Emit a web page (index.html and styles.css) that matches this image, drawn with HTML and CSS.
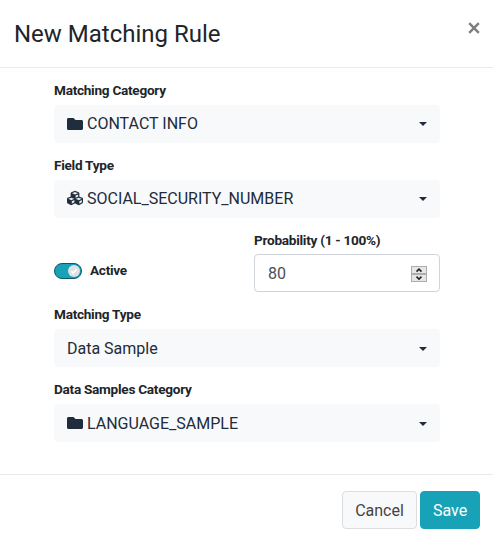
FILE: index.html
```html
<!DOCTYPE html>
<html lang="en">
<head>
<meta charset="utf-8">
<title>New Matching Rule</title>
<link rel="stylesheet" href="styles.css">
</head>
<body>
<svg width="0" height="0" class="defs">
<symbol id="folder" viewBox="0 0 512 512"><path d="M464 128H272l-64-64H48C21.5 64 0 85.5 0 112v288c0 26.5 21.5 48 48 48h416c26.5 0 48-21.5 48-48V176c0-26.5-21.5-48-48-48z"/></symbol>
<symbol id="cubes" viewBox="0 0 512 512"><path d="M488.6 250.2L392 214V105.5c0-15-9.3-28.4-23.4-33.7l-100-37.5c-8.1-3.1-17.1-3.1-25.3 0l-100 37.5c-14.1 5.3-23.4 18.7-23.4 33.7V214l-96.6 36.2C9.3 255.5 0 268.9 0 283.9V394c0 13.6 7.7 26.1 19.9 32.2l100 50c10.1 5.1 22.1 5.1 32.2 0l103.9-52 103.9 52c10.1 5.1 22.1 5.1 32.2 0l100-50c12.2-6.1 19.9-18.6 19.9-32.2V283.9c0-15-9.3-28.4-23.4-33.7zM358 214.8l-85 31.9v-68.2l85-37v73.3zM154 104.1l102-38.2 102 38.2v.6l-102 41.4-102-41.4v-.6zm84 291.1l-85 42.5v-79.1l85-38.8v75.4zm0-112l-102 41.4-102-41.4v-.6l102-38.2 102 38.2v.6zm240 112l-85 42.5v-79.1l85-38.8v75.4zm0-112l-102 41.4-102-41.4v-.6l102-38.2 102 38.2v.6z"/></symbol>
</svg>
<div class="modal">
  <header class="header">
    <h1 class="title">New Matching Rule</h1>
    <button class="close" aria-label="Close"><svg width="12" height="12" viewBox="0 0 12 12"><path d="M1.2 1.2l9.6 9.6M10.8 1.2l-9.6 9.6"/></svg></button>
  </header>
  <main class="body">
    <div class="group">
      <span class="label">Matching Category</span>
      <div class="select"><svg class="icon"><use href="#folder"/></svg><span class="value">CONTACT INFO</span><i class="caret"></i></div>
    </div>
    <div class="group">
      <span class="label">Field Type</span>
      <div class="select"><svg class="icon cubes"><use href="#cubes"/></svg><span class="value">SOCIAL_SECURITY_NUMBER</span><i class="caret"></i></div>
    </div>
    <div class="row">
      <div class="active"><span class="switch"><svg class="knob" viewBox="0 0 12 12"><circle cx="6" cy="6" r="6"/><path d="M3.4 6.3l1.8 1.8 3.5-3.9"/></svg></span><span class="label">Active</span></div>
      <div class="group">
        <span class="label">Probability (1 - 100%)</span>
        <div class="number"><span>80</span><span class="spinner"><svg viewBox="0 0 14 6"><path d="M4.5 4.6L7 2.1l2.5 2.5"/></svg><svg viewBox="0 0 14 6"><path d="M4.5 1.6L7 4.1l2.5-2.5"/></svg></span></div>
      </div>
    </div>
    <div class="group">
      <span class="label">Matching Type</span>
      <div class="select low"><span class="value">Data Sample</span><i class="caret"></i></div>
    </div>
    <div class="group">
      <span class="label">Data Samples Category</span>
      <div class="select low"><svg class="icon"><use href="#folder"/></svg><span class="value">LANGUAGE_SAMPLE</span><i class="caret"></i></div>
    </div>
  </main>
  <footer class="footer">
    <button class="btn cancel">Cancel</button>
    <button class="btn save">Save</button>
  </footer>
</div>
</body>
</html>
```
FILE: styles.css
```css
* { box-sizing: border-box; }
body { margin: 0; background: #fff; font: 16px/24px Roboto, sans-serif; color: #212529; overflow: hidden; }
.defs { display: block; }
.modal { height: 545px; display: flex; flex-direction: column; }
.header { height: 68px; flex: none; border-bottom: 1px solid #e9ecef; padding: 0 13px 0 14px; display: flex; justify-content: space-between; }
.title { margin: 16px 0 0; font-size: 24px; line-height: 36px; font-weight: 400; }
.close { width: 12px; height: 12px; margin-top: 22px; padding: 0; border: 0; background: none; }
.close svg { display: block; }
.close path { stroke: #7f7f7f; stroke-width: 2.5; fill: none; }
.body { flex: 1; padding: 12px 53px 0 54px; }
.group { height: 74.8px; padding-top: 1px; }
.label { display: block; height: 24px; font-size: 13.6px; line-height: 18px; font-weight: 700; letter-spacing: -0.27px; }
.select { height: 38px; background: #f8f9fa; border-radius: 4px; padding: 0 13px; display: flex; align-items: center; color: #212b3b; }
.low { padding-top: 1px; }
.icon { width: 16px; height: 16px; fill: #1f2d3d; margin: 0 4px 1px 0; }
.cubes { stroke: #1f2d3d; stroke-width: 6; }
.caret { margin-left: auto; border: 4.5px solid transparent; border-top-color: #212b3b; border-bottom: 0; }
.row { display: grid; grid-template-columns: 200px 1fr; }
.row .group .label { height: 23px; }
.active { display: flex; align-items: center; gap: 8px; height: 20px; margin-top: 31px; }
.active .label { height: 20px; }
.switch { width: 28px; height: 16px; border: 1px solid #0c5964; border-radius: 8px; background: #17a2b8; display: flex; justify-content: flex-end; align-items: center; padding-right: 1px; }
.knob { width: 12px; height: 12px; fill: #dee2e6; }
.knob path { fill: none; stroke: #fff; stroke-width: 1.5; }
.number { height: 38px; border: 1px solid #ced4da; border-radius: 4px; padding: 2px 12px 0 13px; display: flex; justify-content: space-between; align-items: center; color: #495057; }
.spinner { width: 16px; height: 16px; display: grid; grid-template-rows: 8px 8px; }
.spinner svg { width: 16px; height: 8px; border: 1px solid #adadad; background: #e6e6e6; }
.spinner path { fill: none; stroke: #222; stroke-width: 1.5; }
.footer { height: 71px; flex: none; border-top: 1px solid #e9ecef; padding: 16px 13px 0; display: flex; justify-content: flex-end; gap: 3px; }
.btn { height: 38px; padding: 1px 0 0; border: 1px solid #ddd; border-radius: 4px; font: 16px/24px Roboto, sans-serif; }
.cancel { width: 75px; background: #f8f9fa; color: #444; }
.save { width: 60px; background: #17a2b8; border-color: #17a2b8; color: #fff; }
```
